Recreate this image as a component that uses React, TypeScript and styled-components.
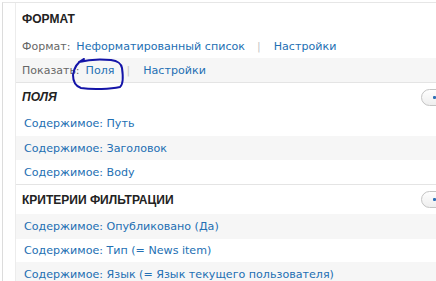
import React from "react";
import styled, { createGlobalStyle } from "styled-components";

const Global = createGlobalStyle`
  html, body { margin: 0; padding: 0; background: #fff; overflow: hidden; }
  body { font-family: "DejaVu Sans", Verdana, sans-serif; font-size: 11px; }
`;

const Page = styled.div`
  width: 436px;
  height: 281px;
  overflow: hidden;
  position: relative;
  padding: 2px 0 0 2px;
  box-sizing: border-box;
`;

const Frame = styled.div`
  border-left: 1px solid #dcdcdc;
  border-top: 1px solid #e6e6e6;
  padding-left: 12px;
  height: 100%;
  box-sizing: border-box;
`;

const Panel = styled.div`
  border-left: 1px solid #ececec;
  display: flex;
  flex-direction: column;
`;

const Section = styled.section<{ $divider?: boolean }>`
  display: flex;
  flex-direction: column;
  border-top: ${(p) => (p.$divider ? "1px solid #e4e4e4" : "none")};
`;

const Head = styled.div<{ $italic?: boolean; $h: number }>`
  height: ${(p) => p.$h}px;
  display: flex;
  align-items: center;
  justify-content: space-between;
  padding-left: 6px;
  font-family: "Liberation Sans", Arial, sans-serif;
  font-weight: bold;
  font-size: 12px;
  color: #222;
  font-style: ${(p) => (p.$italic ? "italic" : "normal")};
  text-transform: uppercase;
`;

const PillButton = styled.span`
  width: 40px;
  height: 17px;
  margin-right: -25px;
  border: 1px solid #c4c4c4;
  border-radius: 9px;
  background: linear-gradient(#fefefe, #eeeeee);
  display: flex;
  align-items: center;
  padding-left: 11px;
  box-sizing: border-box;
  &::before {
    content: "";
    width: 3px;
    height: 3px;
    background: #2f6fb6;
    border-radius: 1px;
  }
`;

const Row = styled.div<{ $alt?: boolean; $h?: number }>`
  height: ${(p) => p.$h ?? 24}px;
  display: flex;
  align-items: center;
  padding-left: 8px;
  background: ${(p) => (p.$alt ? "#f6f6f6" : "#fff")};
  white-space: nowrap;
  position: relative;
`;

const Label = styled.span`
  color: #666;
  margin-left: -2px;
  margin-right: 6px;
`;

const Link = styled.a`
  color: #236fb3;
  text-decoration: none;
  font-size: 11.1px;
`;

const Sep = styled.span`
  color: #c6c6c6;
  margin: 0 13px 0 12px;
`;

const Scribble = styled.svg`
  position: absolute;
  left: 55px;
  top: -1px;
  pointer-events: none;
`;

export default function App() {
  return (
    <>
      <Global />
      <Page>
        <Frame>
          <Panel>
            <Section>
              <Head $h={31}>Формат</Head>
              <Row $h={24}>
                <Label>Формат:</Label>
                <Link>Неформатированный список</Link>
                <Sep>|</Sep>
                <Link>Настройки</Link>
              </Row>
              <Row $alt $h={24}>
                <Label>Показать:</Label>
                <Link>Поля</Link>
                <Sep>|</Sep>
                <Link>Настройки</Link>
                <Scribble width="56" height="34" viewBox="0 0 56 34">
                  <path
                    d="M13 2 C7 5, 3 10, 2 18 C2 25, 4 29, 10 31 C22 33, 40 32, 49 30 C53 27, 52 18, 51 11 C50 6, 47 4, 40 3 C30 2, 19 2, 8 5"
                    fill="none"
                    stroke="#1414a8"
                    strokeWidth="2"
                    strokeLinecap="round"
                  />
                </Scribble>
              </Row>
            </Section>
            <Section $divider>
              <Head $italic $h={28}>
                Поля
                <PillButton />
              </Head>
              <Row $h={25}>
                <Link>Содержимое: Путь</Link>
              </Row>
              <Row $alt>
                <Link>Содержимое: Заголовок</Link>
              </Row>
              <Row>
                <Link>Содержимое: Body</Link>
              </Row>
            </Section>
            <Section $divider>
              <Head $h={29}>
                Критерии фильтрации
                <PillButton />
              </Head>
              <Row $alt $h={25}>
                <Link>Содержимое: Опубликовано (Да)</Link>
              </Row>
              <Row $h={23}>
                <Link>Содержимое: Тип (= News item)</Link>
              </Row>
              <Row $alt>
                <Link>Содержимое: Язык (= Язык текущего пользователя)</Link>
              </Row>
            </Section>
          </Panel>
        </Frame>
      </Page>
    </>
  );
}
